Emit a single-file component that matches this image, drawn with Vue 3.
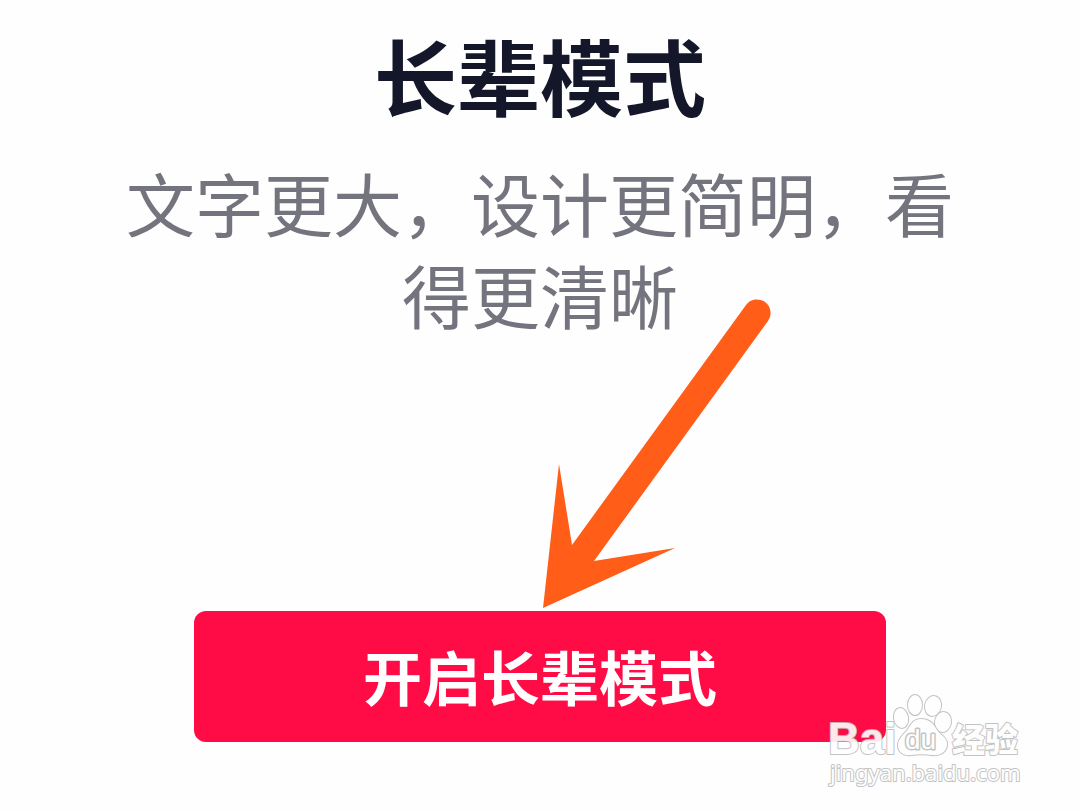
<script setup>
const title = '长辈模式'
const description = '文字更大，设计更简明，看得更清晰'
const action = '开启长辈模式'
</script>

<template>
  <main class="page" lang="zh-CN">
    <h1 class="title">{{ title }}</h1>
    <p class="description">{{ description }}</p>
    <div class="action-row">
      <button class="action" type="button">{{ action }}</button>
      <svg class="arrow" viewBox="0 0 232 312" aria-hidden="true">
        <path d="M3 309 L19 165 L32 246 L206 6 A13.5 13.5 0 0 1 228 22 L54 262 L135 249 Z" />
      </svg>
    </div>
    <svg class="watermark" viewBox="0 0 200 100" role="img" aria-label="Baidu 经验">
      <text class="latin" x="2" y="62">Bai</text>
      <g class="paw">
        <ellipse cx="75" cy="26" rx="7" ry="10" transform="rotate(-10 75 26)" />
        <ellipse cx="89" cy="13" rx="7" ry="10" />
        <ellipse cx="107" cy="14" rx="8" ry="10" transform="rotate(12 107 14)" />
        <ellipse cx="117" cy="30" rx="8" ry="10" transform="rotate(10 117 30)" />
        <path d="M95 27 C103 27 107 31 111 38 C114 43 121 45 121 52 C121 60 114 64 106 63 C99 62 92 62 85 63 C77 64 72 60 72 53 C72 46 78 43 82 37 C86 31 88 27 95 27 Z" />
      </g>
      <text class="du" x="79" y="57">du</text>
      <text class="cjk" x="126" y="60">经验</text>
      <text class="domain" x="4" y="89">jingyan.baidu.com</text>
    </svg>
  </main>
</template>

<style>
body {
  margin: 0;
  background: #fefefe;
}
</style>

<style scoped>
.page {
  position: relative;
  box-sizing: border-box;
  min-height: 100vh;
  padding: 24px 24px 68px;
  display: flex;
  flex-direction: column;
  align-items: center;
  overflow: hidden;
  background: #fefefe;
  font-family: "Noto Sans CJK SC", sans-serif;
  text-align: center;
}

.title {
  margin: 0;
  font-size: 83px;
  line-height: 100px;
  font-weight: 700;
  color: #14172a;
}

.description {
  margin: 32px 0 0;
  max-width: 12em;
  font-size: 69px;
  line-height: 92px;
  font-weight: 400;
  color: #73747e;
}

.action-row {
  position: relative;
  width: 67%;
  margin-top: auto;
}

.action {
  display: block;
  width: 100%;
  padding: 21px 0 22px;
  border: 0;
  border-radius: 12px;
  background: #ff0b46;
  color: #fefefe;
  font-family: inherit;
  font-size: 59px;
  line-height: 88px;
  font-weight: 700;
  cursor: pointer;
}

.arrow {
  position: absolute;
  left: 50%;
  bottom: 100%;
  width: 232px;
  height: 312px;
  fill: #ff5d18;
  pointer-events: none;
}

.watermark {
  position: absolute;
  right: 54px;
  bottom: 18px;
  width: 200px;
  height: 100px;
  overflow: visible;
  opacity: 0.9;
  pointer-events: none;
}

.watermark text,
.paw {
  fill: #ffffff;
  stroke: #bdbdbd;
  stroke-width: 2px;
  stroke-linejoin: round;
  paint-order: stroke;
}

.latin {
  font: 700 44px "Liberation Sans", Arial, sans-serif;
}

.watermark .du {
  font: 400 28px "Liberation Sans", Arial, sans-serif;
  stroke-width: 3px;
}

.cjk {
  font: 900 33px "Noto Sans CJK SC", sans-serif;
}

.domain {
  font: 400 22px "Noto Sans", sans-serif;
}
</style>
